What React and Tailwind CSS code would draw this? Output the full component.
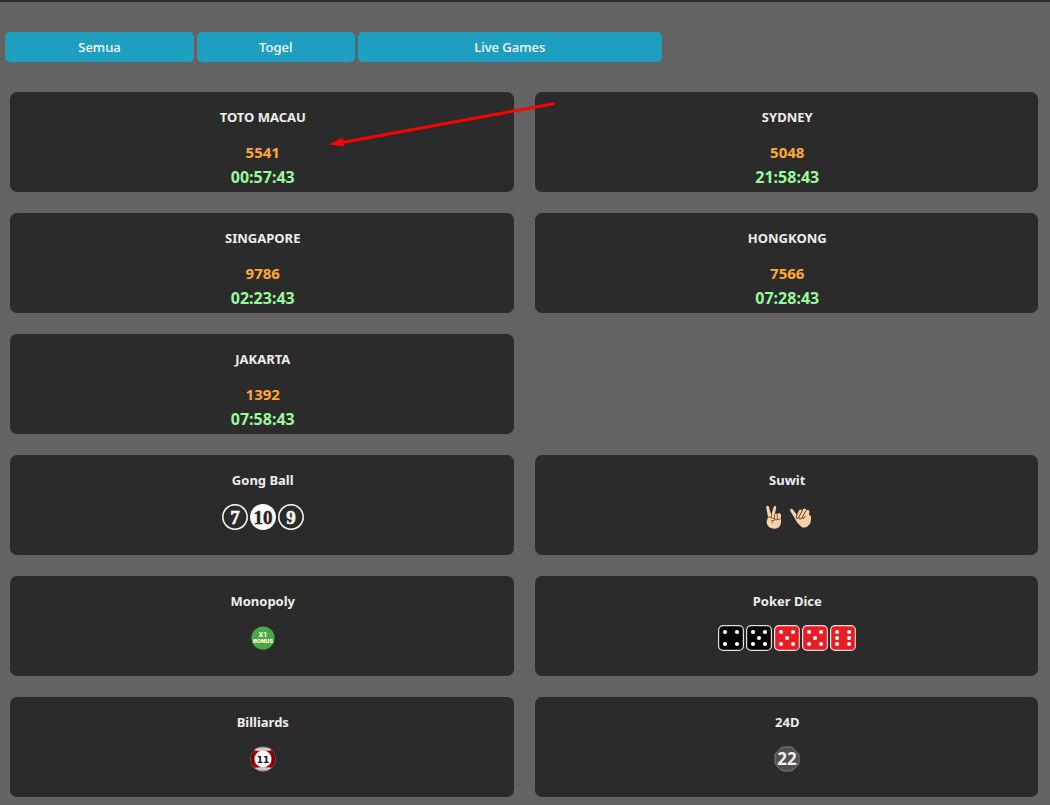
const markets = [
  { name: "TOTO MACAU", result: "5541", time: "00:57:43" },
  { name: "SYDNEY", result: "5048", time: "21:58:43" },
  { name: "SINGAPORE", result: "9786", time: "02:23:43" },
  { name: "HONGKONG", result: "7566", time: "07:28:43" },
  { name: "JAKARTA", result: "1392", time: "07:58:43" },
];

function NumberBall({ value, filled }) {
  return (
    <svg width="26" height="26" viewBox="0 0 26 26">
      <circle cx="13" cy="13" r="12.2" fill={filled ? "#fff" : "#2b2b2b"} stroke="#fff" strokeWidth="1.5" />
      <text
        x="13"
        y="19.5"
        textAnchor="middle"
        fill={filled ? "#222" : "#fff"}
        stroke={filled ? "#222" : "#fff"}
        strokeWidth="0.5"
        className="font-['Liberation_Serif',serif] text-[19px] font-bold"
      >
        {value}
      </text>
    </svg>
  );
}

const pips = {
  4: [[7, 7], [19, 7], [7, 19], [19, 19]],
  5: [[7, 7], [19, 7], [13, 13], [7, 19], [19, 19]],
  6: [[7, 7], [19, 7], [7, 13], [19, 13], [7, 19], [19, 19]],
};

function Die({ value, color }) {
  return (
    <svg width="26" height="26" viewBox="0 0 26 26">
      <rect x="0.6" y="0.6" width="24.8" height="24.8" rx="4.5" fill={color} stroke="#e8dede" strokeWidth="1.2" />
      {pips[value].map(([x, y]) => (
        <circle key={`${x}-${y}`} cx={x} cy={y} r="2.1" fill="#fff" />
      ))}
    </svg>
  );
}

function Scissors() {
  return (
    <svg width="26" height="26" viewBox="0 0 26 26" strokeLinecap="round" strokeLinejoin="round">
      <path
        d="M8 13 6.2 3.4C6 1.5 8.5 1.2 9 3.2L11.3 11 13.6 3.2C14.4 1.3 16.6 2 16.2 3.9L14.6 10.5Q16 8.6 17.3 10.3 18.5 8.2 20 9.5 21.2 10 21 12V18.5Q20.5 24.5 14.5 24.8 7.500 24.800 6.500 18Z"
        fill="#fad0a8"
      />
      <path
        d="M6.6 15Q8.5 11.5 11 13.2L15 15.3Q15 17 13 16.6L11.5 16.2Q12.5 17.5 12.3 19M11.6 10.8 11.5 12.8M14.5 10.5V14.6M17.3 10.5V15.5Q16 16.8 15 15.3M21 14Q20 17 17.3 15.5"
        fill="none"
        stroke="#6d452d"
        strokeWidth="0.8"
      />
    </svg>
  );
}

function Pinky() {
  return (
    <svg width="26" height="26" viewBox="0 0 26 26" strokeLinecap="round" strokeLinejoin="round">
      <path
        d="M9.500 19 2.300 7C1.300 5 3.800 4 5 5.700L9 11 11 6.500Q12.300 4.800 13.700 6.200L14 7 15.500 4.800Q17 3.700 18 5.500L17.900 7 19.300 5.800Q21 5.500 21.500 7.500L21 10.500 23 12.500Q23.500 17 21.500 20.500 18 25 13.500 23Z"
        fill="#fad0a8"
      />
      <path
        d="M9 11 8 13.500Q8.800 15.200 10.500 14L14 7M10.800 14.200Q12 16.300 13.700 14.300L17.800 7M14.300 14.200Q16.200 15 17.200 12.700"
        fill="none"
        stroke="#5d3925"
        strokeWidth="1"
      />
    </svg>
  );
}

function BonusChip() {
  return (
    <svg width="26" height="26" viewBox="0 0 26 26" textAnchor="middle" fill="#fff">
      <circle cx="13" cy="13" r="11.6" fill="#49a849" />
      <text x="13" y="11.5" className="font-['Roboto',sans-serif] text-[7px] font-bold">X1</text>
      <text x="13" y="18" className="font-['Roboto',sans-serif] text-[6px] font-black">BONUS</text>
    </svg>
  );
}

function BilliardBall() {
  return (
    <svg width="26" height="26" viewBox="0 0 26 26">
      <defs>
        <clipPath id="ball-edge"><circle cx="13" cy="13" r="12.5" /></clipPath>
        <linearGradient id="ball-band">
          <stop offset="0" stopColor="#5c0000" />
          <stop offset=".2" stopColor="#b00000" />
          <stop offset=".8" stopColor="#a00000" />
          <stop offset="1" stopColor="#4c0000" />
        </linearGradient>
        <linearGradient id="ball-base" x2="0" y2="1">
          <stop offset="0" stopColor="#777" />
          <stop offset=".16" stopColor="#f0e8e8" />
          <stop offset=".8" stopColor="#eee" />
          <stop offset="1" stopColor="#888" />
        </linearGradient>
      </defs>
      <g clipPath="url(#ball-edge)">
        <path fill="url(#ball-base)" d="M0 0h26v26H0z" />
        <path fill="url(#ball-band)" d="M0 3.500q13 2.500 26 0v19q-13-2.500-26 0z" />
      </g>
      <circle cx="13" cy="13" r="8.5" fill="#fff" />
      <text x="13" y="16.5" textAnchor="middle" fill="#111" className="font-['DejaVu_Sans',sans-serif] text-[9px] font-bold">11</text>
    </svg>
  );
}

function GrayBall() {
  return (
    <svg width="26" height="26" viewBox="0 0 26 26">
      <path d="M8 1h10l7 7v10l-7 7H8l-7-7V8z" fill="#505050" stroke="#666" strokeLinejoin="round" />
      <circle cx="13" cy="13" r="12.2" fill="#505050" stroke="#707070" />
      <text x="13" y="19" textAnchor="middle" fill="#f2f2f2" className="font-['Noto_Sans',sans-serif] text-[17px] font-bold">22</text>
    </svg>
  );
}

const games = [
  {
    name: "Gong Ball",
    icons: <><NumberBall value="7" /><NumberBall value="10" filled /><NumberBall value="9" /></>,
  },
  { name: "Suwit", icons: <><Scissors /><Pinky /></> },
  { name: "Monopoly", icons: <BonusChip /> },
  {
    name: "Poker Dice",
    icons: (
      <>
        <Die value={4} color="#000" />
        <Die value={5} color="#000" />
        <Die value={5} color="#ed1c24" />
        <Die value={5} color="#ed1c24" />
        <Die value={6} color="#ed1c24" />
      </>
    ),
  },
  { name: "Billiards", icons: <BilliardBall /> },
  { name: "24D", icons: <GrayBall /> },
];

function Card({ title, children }) {
  return (
    <article className="min-h-[100px] rounded-[7px] bg-[#2b2b2b] pt-[13px] pb-[2px] pl-[2px] text-center font-bold">
      <h2 className="text-[13px] leading-6 text-[#eeeeee]">{title}</h2>
      {children}
    </article>
  );
}

export default function App() {
  return (
    <div className="min-h-screen border-t-2 border-[#2b2b2b] bg-[#636363] pb-2 font-['Noto_Sans',sans-serif]">
      <nav className="flex gap-[3px] pt-[30px] text-[13px] leading-[30px] font-medium text-white">
        <button type="button" className="ml-[5px] w-[18%] rounded-[5px] bg-[#1f9fbf]">Semua</button>
        <button type="button" className="w-[15%] rounded-[5px] bg-[#1f9fbf]">Togel</button>
        <button type="button" className="w-[29%] rounded-[5px] bg-[#1f9fbf]">Live Games</button>
      </nav>
      <main className="relative mt-[30px] mr-3 ml-[10px] flex flex-col gap-[21px]">
        <section className="grid grid-cols-2 gap-[21px]">
          {markets.map((m) => (
            <Card key={m.name} title={m.name}>
              <p className="mt-[11px] text-[15px] leading-[25px] text-[#ffa931]">{m.result}</p>
              <p className="text-[16px] leading-[25px] text-[#98fb98]">{m.time}</p>
            </Card>
          ))}
        </section>
        <section className="grid grid-cols-2 gap-[21px]">
          {games.map((g) => (
            <Card key={g.name} title={g.name}>
              <div className="mt-[12px] flex justify-center gap-[2px]">{g.icons}</div>
            </Card>
          ))}
        </section>
        <svg className="pointer-events-none absolute top-[8px] left-[318px]" width="230" height="50" viewBox="0 0 230 50">
          <path d="M225.5 3.7 14 42.5" stroke="#f00" strokeWidth="3" strokeLinecap="round" />
          <path d="M1 44.5 14.5 37.5 16 46.5Z" fill="#f00" />
        </svg>
      </main>
    </div>
  );
}
